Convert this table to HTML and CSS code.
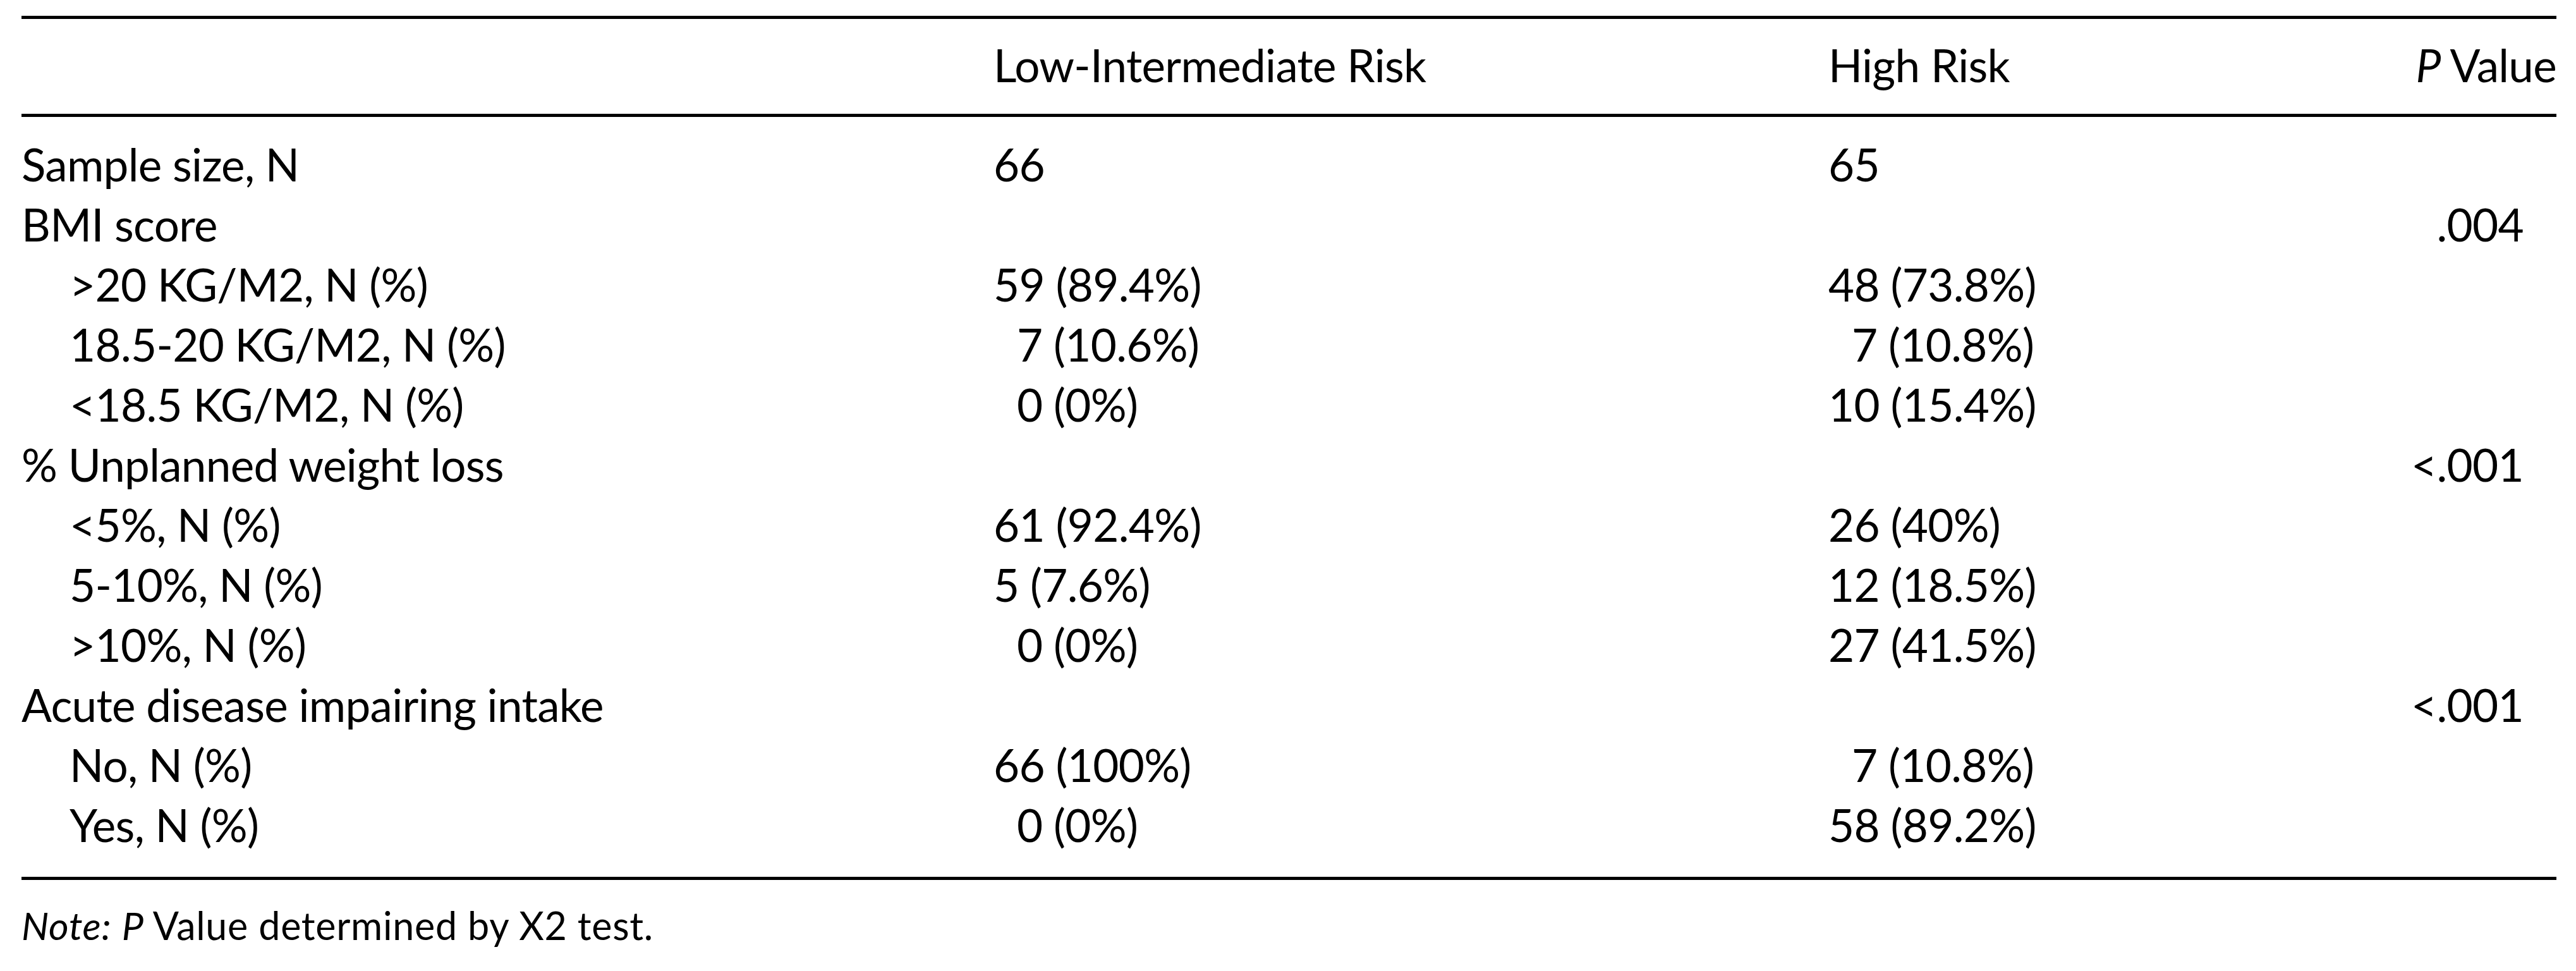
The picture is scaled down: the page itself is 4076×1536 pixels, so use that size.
FILE: index.html
```html
<!DOCTYPE html>
<html lang="en">
<head>
<meta charset="utf-8">
<title>Nutrition risk table</title>
<link rel="stylesheet" href="styles.css">
</head>
<body>
<div class="page">
  <table class="data">
    <colgroup>
      <col class="w-label">
      <col class="w-low">
      <col class="w-high">
      <col class="w-p">
    </colgroup>
    <thead>
      <tr>
        <th></th>
        <th>Low-Intermediate Risk</th>
        <th class="hi-head">High Risk</th>
        <th class="p-head"><i>P</i> Value</th>
      </tr>
    </thead>
    <tbody>
      <tr class="first"><td>Sample size, N</td><td>66</td><td>65</td><td class="p"></td></tr>
      <tr><td>BMI score</td><td></td><td></td><td class="p">.004</td></tr>
      <tr><td class="sub">&gt;20 KG/M2, N (%)</td><td>59 (89.4%)</td><td>48 (73.8%)</td><td class="p"></td></tr>
      <tr><td class="sub">18.5-20 KG/M2, N (%)</td><td class="fig">7 (10.6%)</td><td class="fig">7 (10.8%)</td><td class="p"></td></tr>
      <tr><td class="sub">&lt;18.5 KG/M2, N (%)</td><td class="fig">0 (0%)</td><td>10 (15.4%)</td><td class="p"></td></tr>
      <tr><td>% Unplanned weight loss</td><td></td><td></td><td class="p">&lt;.001</td></tr>
      <tr><td class="sub">&lt;5%, N (%)</td><td>61 (92.4%)</td><td>26 (40%)</td><td class="p"></td></tr>
      <tr><td class="sub">5-10%, N (%)</td><td>5 (7.6%)</td><td>12 (18.5%)</td><td class="p"></td></tr>
      <tr><td class="sub">&gt;10%, N (%)</td><td class="fig">0 (0%)</td><td>27 (41.5%)</td><td class="p"></td></tr>
      <tr><td>Acute disease impairing intake</td><td></td><td></td><td class="p">&lt;.001</td></tr>
      <tr><td class="sub">No, N (%)</td><td>66 (100%)</td><td class="fig">7 (10.8%)</td><td class="p"></td></tr>
      <tr class="last"><td class="sub">Yes, N (%)</td><td class="fig">0 (0%)</td><td>58 (89.2%)</td><td class="p"></td></tr>
    </tbody>
  </table>
  <p class="note"><i>Note:</i> <i>P</i> Value determined by X2 test.</p>
</div>
</body>
</html>
```

FILE: styles.css
```css
html, body {
  margin: 0;
  padding: 0;
  background: #ffffff;
}

body {
  color: #000000;
  font-family: Lato, "Noto Sans", "DejaVu Sans", sans-serif;
}

.page {
  padding: 25px 0 0 34px;
}

.data {
  width: 4011px;
  table-layout: fixed;
  border-collapse: separate;
  border-spacing: 0;
  border-top: 5px solid #000000;
  border-bottom: 5px solid #000000;
  font-size: 71px;
  line-height: 95px;
  letter-spacing: -0.7px;
  font-variant-numeric: tabular-nums;
}

.w-label { width: 1538px; }
.w-low { width: 1321px; }
.w-high { width: 882px; }
.w-p { width: 270px; }

.data th {
  font-weight: 400;
  text-align: left;
  white-space: nowrap;
  padding: 25px 0 30px 0;
  border-bottom: 5px solid #000000;
}

.data th.p-head {
  text-align: right;
}

.data td {
  padding: 0;
  white-space: nowrap;
  text-align: left;
  vertical-align: baseline;
}

.data tr.first td {
  padding-top: 27px;
}

.data tr.last td {
  padding-bottom: 35px;
}

.data td.sub {
  padding-left: 76px;
}

.data td.fig {
  padding-left: 37px;
}

.data td.p {
  text-align: right;
  padding-right: 52px;
}

.note {
  margin: 35px 0 0 0;
  font-size: 61px;
  line-height: 73px;
  letter-spacing: 0.7px;
}
```
